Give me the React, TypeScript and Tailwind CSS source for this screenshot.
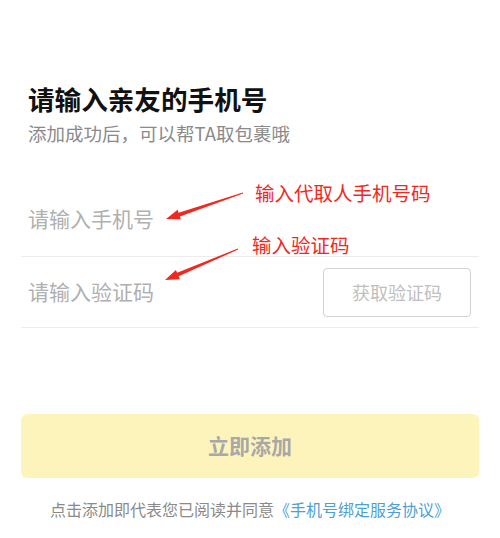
import React from 'react';

const FONT = { fontFamily: '"Noto Sans CJK SC", "Noto Sans", sans-serif' };

const Arrow = ({ x1, y1, x2, y2 }: { x1: number; y1: number; x2: number; y2: number }) => {
  // tapered red arrow: thin tail, thick near the head
  const dx = x2 - x1;
  const dy = y2 - y1;
  const len = Math.hypot(dx, dy);
  const ux = dx / len;
  const uy = dy / len;
  const px = -uy;
  const py = ux;
  const hx = x2 - ux * 14;
  const hy = y2 - uy * 14;
  const pts = [
    [x1 + px * 0.5, y1 + py * 0.5],
    [hx + px * 2, hy + py * 2],
    [hx + px * 5, hy + py * 5],
    [x2, y2],
    [hx - px * 5, hy - py * 5],
    [hx - px * 2, hy - py * 2],
    [x1 - px * 0.5, y1 - py * 0.5],
  ];
  return <polygon points={pts.map(p => p.join(',')).join(' ')} fill="#f2281e" />;
};

export default function App() {
  return (
    <div className="relative w-[500px] h-[538px] bg-white overflow-hidden" style={FONT}>
      <div className="px-[28px] pt-[82px]">
        <h1 className="text-[26.6px] leading-[34px] font-bold text-[#111]">请输入亲友的手机号</h1>
        <p className="mt-[5px] text-[18.5px] leading-[24px] text-[#8a8a8a]">添加成功后，可以帮TA取包裹哦</p>
      </div>

      <div className="mt-[25px] mx-[21px]">
        <div className="flex items-center h-[87px] border-b border-[#ececec] pl-[7px] pt-[12px]">
          <span className="text-[21px] text-[#b0b0b0]">请输入手机号</span>
        </div>
        <div className="flex items-center justify-between h-[71px] border-b border-[#ececec] pl-[7px] pr-[8px]">
          <span className="text-[21px] text-[#b0b0b0]">请输入验证码</span>
          <div className="flex items-center justify-center w-[148px] h-[49px] border border-[#d2d2d2] rounded-[4px]">
            <span className="text-[18px] text-[#c0c0c0]">获取验证码</span>
          </div>
        </div>
      </div>

      <div className="mt-[86px] mx-[21px] h-[64px] rounded-[6px] bg-[#fdf4bc] flex items-center justify-center">
        <span className="text-[21px] font-bold text-[#a8a8a8]">立即添加</span>
      </div>

      <p className="mt-[19px] text-center text-[16px] text-[#8a8a8a]">
        点击添加即代表您已阅读并同意<span className="text-[#4d9fd9]">《手机号绑定服务协议》</span>
      </p>

      <span className="absolute left-[255px] top-[180px] text-[19.5px] leading-[26px] text-[#f2281e]">输入代取人手机号码</span>
      <span className="absolute left-[252px] top-[232px] text-[19.5px] leading-[26px] text-[#f2281e]">输入验证码</span>
      <svg className="absolute left-0 top-0" width="500" height="538">
        <Arrow x1={243} y1={193} x2={166} y2={219} />
        <Arrow x1={238} y1={249} x2={165} y2={280} />
      </svg>
    </div>
  );
}
